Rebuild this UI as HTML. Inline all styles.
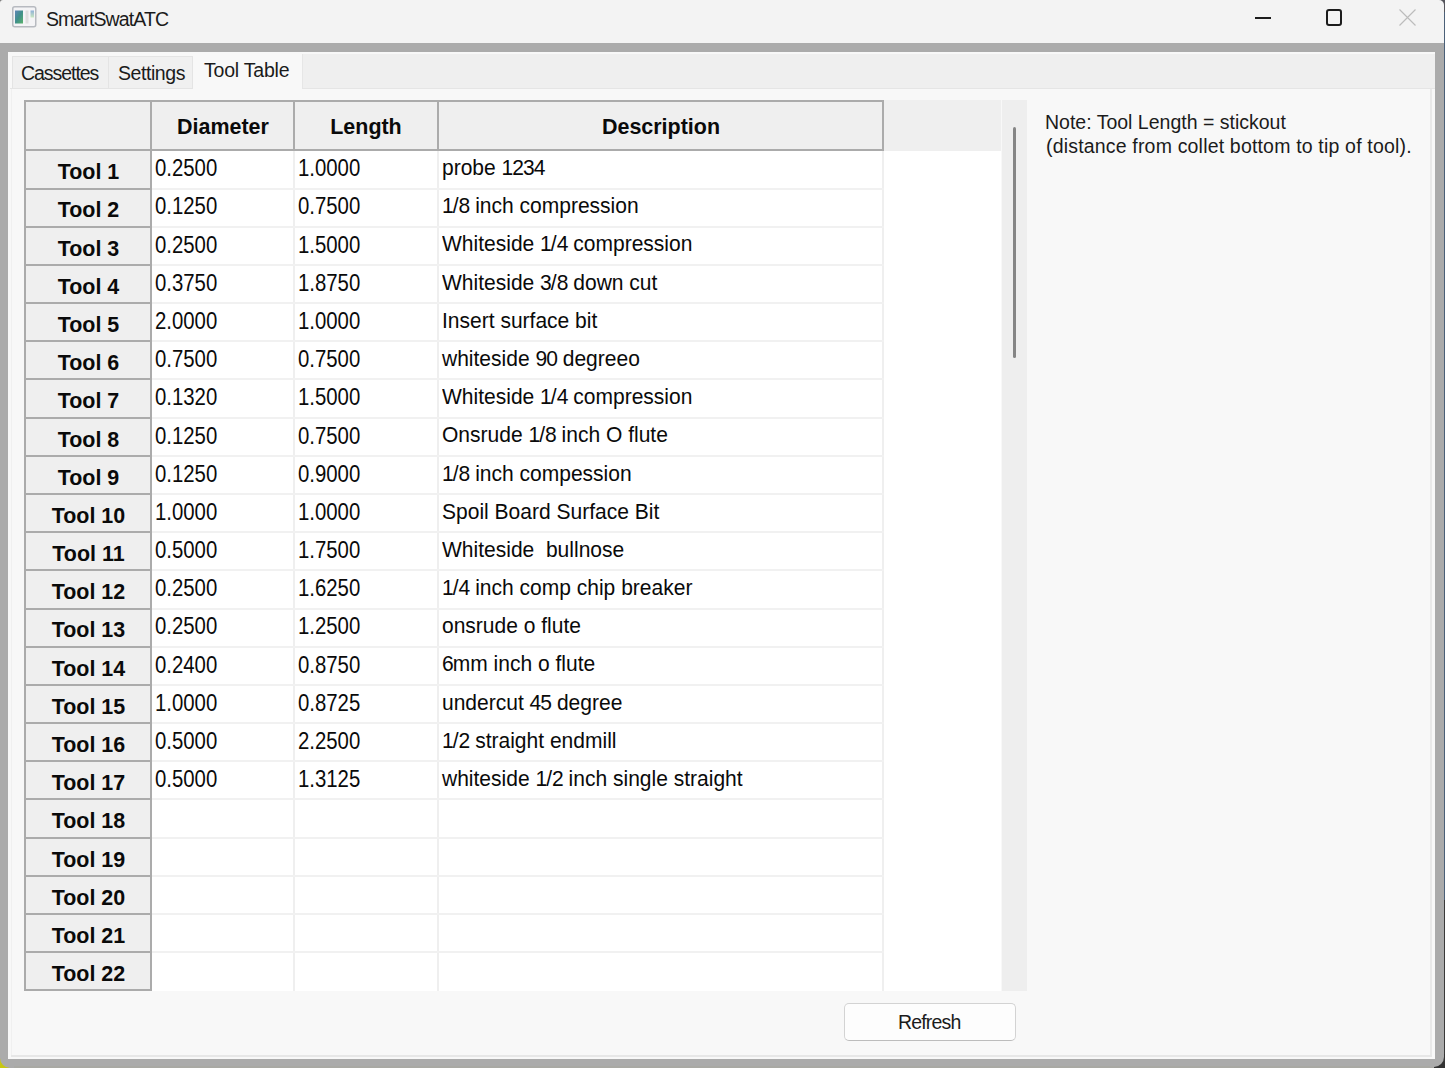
<!DOCTYPE html>
<html><head><meta charset="utf-8">
<style>
*{margin:0;padding:0;box-sizing:border-box}
html,body{width:1445px;height:1068px;overflow:hidden;background:#ababab;font-family:"Liberation Sans",sans-serif;color:#000}
div,span,svg{position:absolute}
#title{left:0;top:0;width:1444px;height:43px;background:#f3f3f3;border-radius:3px 5px 0 0}
.t{white-space:pre;color:#1b1b1b;font-size:18px;line-height:normal}
#body{left:8px;top:52px;width:1427px;height:1007px;background:#f8f8f8}
#pane{left:9px;top:88px;width:1425px;height:969px;border:1px solid #e7e7e7;border-top:none}
#pane2{left:10px;top:89px;width:1423px;height:967px;border:1px solid #f1f1f1;border-top:none}
#tabbar{left:12px;top:55px;width:1421px;height:34px;background:#f0f0f0;border:1px solid #e6e6e6}
.tab{top:56px;height:33px;border:1px solid #e4e4e4;background:#f0f0f0}
#tabsel{left:193px;top:53px;width:109px;height:37px;background:#f9f9f9}
#hdr{left:25px;top:100px;width:976px;height:51px;background:#efefef}
#data{left:151px;top:151px;width:850px;height:840px;background:#fff}
.dl{left:25px;width:127px;height:2px;background:#ababab}
.ll{left:152px;width:732px;height:2px;background:#f1f1f1}
.vd{width:2px;background:#ababab}
.vl{top:151px;width:2px;height:840px;background:#efefef}
.n{font-size:23px;transform:scaleX(0.885);transform-origin:0 0;white-space:pre;line-height:normal;color:#0a0a0a}
.c{font-size:22px;line-height:normal;white-space:pre;color:#0a0a0a;transform:scaleX(0.955);transform-origin:0 0}
.dg{position:static;letter-spacing:-1px}
.rt{left:25px;width:127px;text-align:center;font-weight:bold;font-size:22px;line-height:normal;color:#0a0a0a;transform:scaleX(0.975)}
.hc{top:114px;text-align:center;font-weight:bold;font-size:22px;line-height:normal;color:#0a0a0a;transform:scaleX(0.975)}
</style></head><body>
<div style="left:0;top:0;width:6px;height:6px;background:#777"></div>
<div style="left:1436px;top:0;width:9px;height:12px;background:#55555c"></div>
<div style="left:1444px;top:12px;width:1px;height:888px;background:#4b6078"></div>
<div style="left:1444px;top:900px;width:1px;height:168px;background:#3a3a3a"></div>
<div style="left:0;top:1066px;width:1445px;height:2px;background:#a9a9a4"></div>
<div style="left:0;top:1055px;width:12px;height:13px;background:#c8c810;border-radius:0"></div>
<div style="left:0;top:1054px;width:14px;height:14px;background:#ababab;border-radius:0 0 0 10px"></div>
<div style="left:1434px;top:1054px;width:11px;height:14px;background:#333"></div>
<div style="left:1430px;top:1054px;width:14px;height:13px;background:#ababab;border-radius:0 0 10px 0"></div>
<div id="title">
  <svg style="left:12px;top:6px" width="25" height="22" viewBox="0 0 25 22">
    <defs><linearGradient id="g1" x1="0" y1="0" x2="1" y2="1"><stop offset="0" stop-color="#5f86b8"/><stop offset="0.5" stop-color="#3f8f8a"/><stop offset="1" stop-color="#5bb36a"/></linearGradient>
    <linearGradient id="g2" x1="0" y1="0" x2="0" y2="1"><stop offset="0" stop-color="#8fb0d8"/><stop offset="1" stop-color="#c9e8c0"/></linearGradient></defs>
    <rect x="0.75" y="0.75" width="23" height="20" rx="2" fill="#f4f4f6" stroke="#b7bac0" stroke-width="1.5"/>
    <rect x="3" y="4.5" width="8" height="13" fill="url(#g1)"/>
    <rect x="13.5" y="4.5" width="3" height="13" fill="#dedede"/>
    <rect x="18.5" y="4.5" width="3.5" height="7" fill="url(#g2)"/>
  </svg>
  <div class="t" style="left:46px;top:8px;font-size:19.5px;letter-spacing:-0.9px">SmartSwatATC</div>
  <div style="left:1255px;top:17px;width:16px;height:2px;background:#1c1c1c"></div>
  <div style="left:1326px;top:9px;width:16px;height:17px;border:2px solid #1c1c1c;border-radius:3px"></div>
  <svg style="left:1399px;top:9px" width="17" height="17" viewBox="0 0 17 17"><path d="M0.5 0.5L16.5 16.5M16.5 0.5L0.5 16.5" stroke="#bcbcbc" stroke-width="1.1"/></svg>
</div>
<div id="body"></div>
<div style="left:302px;top:54px;width:1133px;height:35px;background:#efefef;border-left:1px solid #e6e6e6;border-bottom:1px solid #e5e5e5"></div>
<div style="left:10px;top:88px;width:183px;height:1px;background:#e5e5e5"></div>
<div style="left:11px;top:89px;width:1px;height:967px;background:#f0f0f0"></div>
<div style="left:1430px;top:89px;width:2px;height:967px;background:#e9e9e9"></div>
<div style="left:11px;top:1055px;width:1421px;height:2px;background:#e7e7e7"></div>
<div class="tab" style="left:12px;width:97px"></div>
<div class="tab" style="left:108px;width:85px"></div>
<div class="t" style="left:21px;top:62px;font-size:19.5px;letter-spacing:-1.05px">Cassettes</div>
<div class="t" style="left:118px;top:62px;font-size:19.5px;letter-spacing:-0.43px">Settings</div>
<div class="t" style="left:204px;top:59px;font-size:19.5px;letter-spacing:-0.22px">Tool Table</div>

<div id="hdr"></div>
<div id="data"></div>
<div style="left:25px;top:151px;width:126px;height:839px;background:#efefef"></div>
<div class="vl" style="left:293px"></div>
<div class="vl" style="left:437px"></div>
<div class="vl" style="left:882px"></div>
<!-- frame -->
<div style="left:25px;top:100px;width:859px;height:2px;background:#ababab"></div>
<div style="left:25px;top:149px;width:859px;height:2px;background:#ababab"></div>
<div class="vd" style="left:24px;top:100px;height:891px"></div>
<div class="vd" style="left:150px;top:100px;height:891px"></div>
<div class="vd" style="left:293px;top:100px;height:51px"></div>
<div class="vd" style="left:437px;top:100px;height:51px"></div>
<div class="vd" style="left:882px;top:100px;height:51px"></div>
<div style="left:25px;top:989px;width:127px;height:2px;background:#ababab"></div>
<div class="hc" style="left:152px;width:142px">Diameter</div>
<div class="hc" style="left:295px;width:142px">Length</div>
<div class="hc" style="left:439px;width:444px">Description</div>
<div class="rt" style="top:159px">Tool 1</div>
<div class="dl" style="top:188px"></div>
<div class="ll" style="top:188px"></div>
<div class="n" style="left:155px;top:155px">0.2500</div>
<div class="n" style="left:298px;top:155px">1.0000</div>
<div class="c" style="left:442px;top:155.10px">probe <span class="dg">1234</span></div>
<div class="rt" style="top:197px">Tool 2</div>
<div class="dl" style="top:226px"></div>
<div class="ll" style="top:226px"></div>
<div class="n" style="left:155px;top:193px">0.1250</div>
<div class="n" style="left:298px;top:193px">0.7500</div>
<div class="c" style="left:442px;top:193.28px"><span class="dg">1</span>/<span class="dg">8</span> inch compression</div>
<div class="rt" style="top:236px">Tool 3</div>
<div class="dl" style="top:264px"></div>
<div class="ll" style="top:264px"></div>
<div class="n" style="left:155px;top:232px">0.2500</div>
<div class="n" style="left:298px;top:232px">1.5000</div>
<div class="c" style="left:442px;top:231.46px">Whiteside <span class="dg">1</span>/<span class="dg">4</span> compression</div>
<div class="rt" style="top:274px">Tool 4</div>
<div class="dl" style="top:302px"></div>
<div class="ll" style="top:302px"></div>
<div class="n" style="left:155px;top:270px">0.3750</div>
<div class="n" style="left:298px;top:270px">1.8750</div>
<div class="c" style="left:442px;top:269.64px">Whiteside <span class="dg">3</span>/<span class="dg">8</span> down cut</div>
<div class="rt" style="top:312px">Tool 5</div>
<div class="dl" style="top:340px"></div>
<div class="ll" style="top:340px"></div>
<div class="n" style="left:155px;top:308px">2.0000</div>
<div class="n" style="left:298px;top:308px">1.0000</div>
<div class="c" style="left:442px;top:307.82px">Insert surface bit</div>
<div class="rt" style="top:350px">Tool 6</div>
<div class="dl" style="top:378px"></div>
<div class="ll" style="top:378px"></div>
<div class="n" style="left:155px;top:346px">0.7500</div>
<div class="n" style="left:298px;top:346px">0.7500</div>
<div class="c" style="left:442px;top:346.00px">whiteside <span class="dg">90</span> degreeo</div>
<div class="rt" style="top:388px">Tool 7</div>
<div class="dl" style="top:417px"></div>
<div class="ll" style="top:417px"></div>
<div class="n" style="left:155px;top:384px">0.1320</div>
<div class="n" style="left:298px;top:384px">1.5000</div>
<div class="c" style="left:442px;top:384.18px">Whiteside <span class="dg">1</span>/<span class="dg">4</span> compression</div>
<div class="rt" style="top:427px">Tool 8</div>
<div class="dl" style="top:455px"></div>
<div class="ll" style="top:455px"></div>
<div class="n" style="left:155px;top:423px">0.1250</div>
<div class="n" style="left:298px;top:423px">0.7500</div>
<div class="c" style="left:442px;top:422.36px">Onsrude <span class="dg">1</span>/<span class="dg">8</span> inch O flute</div>
<div class="rt" style="top:465px">Tool 9</div>
<div class="dl" style="top:493px"></div>
<div class="ll" style="top:493px"></div>
<div class="n" style="left:155px;top:461px">0.1250</div>
<div class="n" style="left:298px;top:461px">0.9000</div>
<div class="c" style="left:442px;top:460.54px"><span class="dg">1</span>/<span class="dg">8</span> inch compession</div>
<div class="rt" style="top:503px">Tool 10</div>
<div class="dl" style="top:531px"></div>
<div class="ll" style="top:531px"></div>
<div class="n" style="left:155px;top:499px">1.0000</div>
<div class="n" style="left:298px;top:499px">1.0000</div>
<div class="c" style="left:442px;top:498.72px">Spoil Board Surface Bit</div>
<div class="rt" style="top:541px">Tool 11</div>
<div class="dl" style="top:569px"></div>
<div class="ll" style="top:569px"></div>
<div class="n" style="left:155px;top:537px">0.5000</div>
<div class="n" style="left:298px;top:537px">1.7500</div>
<div class="c" style="left:442px;top:536.90px">Whiteside  bullnose</div>
<div class="rt" style="top:579px">Tool 12</div>
<div class="dl" style="top:608px"></div>
<div class="ll" style="top:608px"></div>
<div class="n" style="left:155px;top:575px">0.2500</div>
<div class="n" style="left:298px;top:575px">1.6250</div>
<div class="c" style="left:442px;top:575.08px"><span class="dg">1</span>/<span class="dg">4</span> inch comp chip breaker</div>
<div class="rt" style="top:617px">Tool 13</div>
<div class="dl" style="top:646px"></div>
<div class="ll" style="top:646px"></div>
<div class="n" style="left:155px;top:613px">0.2500</div>
<div class="n" style="left:298px;top:613px">1.2500</div>
<div class="c" style="left:442px;top:613.26px">onsrude o flute</div>
<div class="rt" style="top:656px">Tool 14</div>
<div class="dl" style="top:684px"></div>
<div class="ll" style="top:684px"></div>
<div class="n" style="left:155px;top:652px">0.2400</div>
<div class="n" style="left:298px;top:652px">0.8750</div>
<div class="c" style="left:442px;top:651.44px"><span class="dg">6</span>mm inch o flute</div>
<div class="rt" style="top:694px">Tool 15</div>
<div class="dl" style="top:722px"></div>
<div class="ll" style="top:722px"></div>
<div class="n" style="left:155px;top:690px">1.0000</div>
<div class="n" style="left:298px;top:690px">0.8725</div>
<div class="c" style="left:442px;top:689.62px">undercut <span class="dg">45</span> degree</div>
<div class="rt" style="top:732px">Tool 16</div>
<div class="dl" style="top:760px"></div>
<div class="ll" style="top:760px"></div>
<div class="n" style="left:155px;top:728px">0.5000</div>
<div class="n" style="left:298px;top:728px">2.2500</div>
<div class="c" style="left:442px;top:727.80px"><span class="dg">1</span>/<span class="dg">2</span> straight endmill</div>
<div class="rt" style="top:770px">Tool 17</div>
<div class="dl" style="top:798px"></div>
<div class="ll" style="top:798px"></div>
<div class="n" style="left:155px;top:766px">0.5000</div>
<div class="n" style="left:298px;top:766px">1.3125</div>
<div class="c" style="left:442px;top:765.98px">whiteside <span class="dg">1</span>/<span class="dg">2</span> inch single straight</div>
<div class="rt" style="top:808px">Tool 18</div>
<div class="dl" style="top:837px"></div>
<div class="ll" style="top:837px"></div>
<div class="rt" style="top:847px">Tool 19</div>
<div class="dl" style="top:875px"></div>
<div class="ll" style="top:875px"></div>
<div class="rt" style="top:885px">Tool 20</div>
<div class="dl" style="top:913px"></div>
<div class="ll" style="top:913px"></div>
<div class="rt" style="top:923px">Tool 21</div>
<div class="dl" style="top:951px"></div>
<div class="ll" style="top:951px"></div>
<div class="rt" style="top:961px">Tool 22</div>
<div style="left:1002px;top:100px;width:25px;height:891px;background:#eeeeee"></div>
<div style="left:1013px;top:127px;width:3px;height:231px;background:#858585;border-radius:2px"></div>
<div class="t" style="left:1045px;top:110px;font-size:19.5px;line-height:24px;letter-spacing:0px">Note: Tool Length = stickout</div>
<div class="t" style="left:1046px;top:134px;font-size:19.5px;line-height:24px;letter-spacing:0.18px">(distance from collet bottom to tip of tool).</div>
<div style="left:844px;top:1003px;width:172px;height:38px;background:#fdfdfd;border:1px solid #d3d3d3;border-bottom-color:#bcbcbc;border-radius:5px"></div>
<div class="t" style="left:898px;top:1011px;font-size:19.5px;letter-spacing:-0.83px">Refresh</div>
</body></html>
